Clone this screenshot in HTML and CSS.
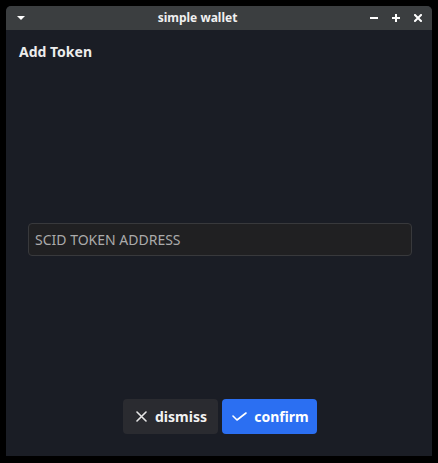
FILE: index.html
```html
<!DOCTYPE html>
<html>
<head>
<meta charset="utf-8">
<link rel="stylesheet" href="styles.css">
</head>
<body>
<div class="window">
  <div class="titlebar">
    <div class="tb-left">
      <svg class="menu-arrow" width="8" height="4" viewBox="0 0 8 4"><polygon points="0,0 8,0 4,4" fill="#ffffff"/></svg>
    </div>
    <div class="title">simple wallet</div>
    <div class="tb-right">
      <svg width="8" height="8" viewBox="0 0 8 8"><rect x="0" y="3" width="8" height="2" fill="#ffffff"/></svg>
      <svg width="8" height="8" viewBox="0 0 8 8"><rect x="0" y="3" width="8" height="2" fill="#ffffff"/><rect x="3" y="0" width="2" height="8" fill="#ffffff"/></svg>
      <svg width="8" height="8" viewBox="0 0 8 8"><path d="M1 1 L7 7 M7 1 L1 7" stroke="#ffffff" stroke-width="2" stroke-linecap="square"/></svg>
    </div>
  </div>
  <div class="content">
    <h1 class="heading">Add Token</h1>
    <div class="field">
      <input class="input" type="text" placeholder="SCID TOKEN ADDRESS">
    </div>
    <div class="actions">
      <button class="btn btn-dismiss">
        <svg width="11" height="11" viewBox="0 0 11 11"><path d="M1 1 L10 10 M10 1 L1 10" stroke="#e6e6e6" stroke-width="1.6" stroke-linecap="round"/></svg>
        <span>dismiss</span>
      </button>
      <button class="btn btn-confirm">
        <svg width="15" height="9" viewBox="0 0 15 9"><path d="M1 4 L5 8 L14 1" fill="none" stroke="#ffffff" stroke-width="1.6" stroke-linecap="round" stroke-linejoin="round"/></svg>
        <span>confirm</span>
      </button>
    </div>
  </div>
</div>
</body>
</html>
```
FILE: styles.css
```css
html, body {
  margin: 0;
  padding: 0;
  background: #000000;
}
body {
  padding: 6px 6px 0 6px;
  font-family: "Noto Sans", "Open Sans", sans-serif;
}
.window {
  width: 426px;
  height: 450px;
  background: #1a1d25;
  border-radius: 5px 5px 0 0;
  overflow: hidden;
  display: flex;
  flex-direction: column;
}
.titlebar {
  height: 24px;
  flex: 0 0 24px;
  background: #3b3e40;
  display: flex;
  align-items: center;
}
.tb-left {
  width: 20px;
  flex: 0 0 20px;
  display: flex;
  align-items: center;
}
.menu-arrow {
  margin-left: 11px;
}
.title {
  flex: 1;
  text-align: center;
  color: #f0f0f0;
  font-weight: 700;
  font-size: 12px;
  line-height: 24px;
}
.tb-right {
  width: 63px;
  flex: 0 0 63px;
  display: flex;
  gap: 14px;
  align-items: center;
  padding-left: 1px;
  box-sizing: border-box;
}
.content {
  flex: 1;
  display: flex;
  flex-direction: column;
}
.heading {
  margin: 12px 0 0 13px;
  font-size: 14px;
  font-weight: 700;
  line-height: 19px;
  color: #ececec;
}
.field {
  margin: 162px 0 0 22px;
}
.input {
  box-sizing: border-box;
  width: 384px;
  height: 33px;
  margin: 0;
  background: #202022;
  border: 1px solid #38393c;
  border-radius: 4px;
  padding: 0 6px;
  font-family: "Noto Sans", "Open Sans", sans-serif;
  font-size: 14px;
  color: #e0e0e0;
  outline: none;
}
.input::placeholder {
  color: #ababab;
  opacity: 1;
}
.actions {
  margin-top: 143px;
  display: flex;
  justify-content: center;
  gap: 4px;
  padding-left: 2px;
}
.btn {
  box-sizing: border-box;
  width: 95px;
  height: 35px;
  border: none;
  border-radius: 4px;
  display: flex;
  align-items: center;
  justify-content: center;
  gap: 8px;
  font-family: "Noto Sans", "Open Sans", sans-serif;
  font-size: 14px;
  font-weight: 700;
  color: #f2f2f2;
  padding: 0 0 0 2px;
}
.btn-dismiss {
  background: #2a2b30;
}
.btn-confirm {
  background: #2b6ff2;
  color: #ffffff;
  gap: 7px;
}
```
